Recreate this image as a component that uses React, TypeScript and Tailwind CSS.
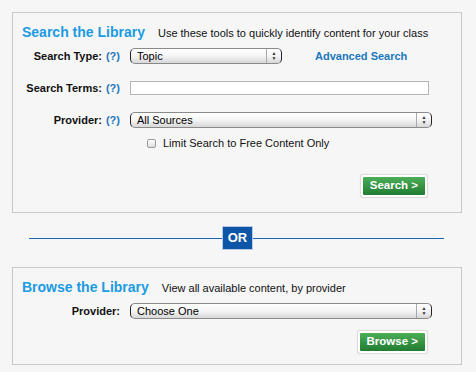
import React from 'react';

const font = { fontFamily: '"Liberation Sans", Arial, sans-serif' };

const Help = () => <span className="ml-[4px] text-[#1a77bd]">(?)</span>;

const SelectBox = ({ value, width }: { value: string; width: string }) => (
  <div
    className={`${width} flex h-[16px] items-stretch rounded-[5px] border border-[#8a8a8a] border-x-[#222] bg-gradient-to-b from-white via-[#f4f4f4] to-[#d8d8d8] text-[11px] leading-[14px] text-black`}
  >
    <span className="flex-1 pl-[6px]">{value}</span>
    <span className="flex w-[15px] flex-col items-center justify-center border-l border-[#a8a8a8] text-[5px] leading-[5px] text-[#333]">
      <span>▲</span>
      <span>▼</span>
    </span>
  </div>
);

const GreenButton = ({ label }: { label: string }) => (
  <div className="rounded-[3px] border border-[#dcdcdc] bg-white p-[2px] shadow-[0_0_1px_rgba(0,0,0,0.15)]">
    <div className="flex h-[18px] items-center justify-center rounded-[1px] bg-gradient-to-b from-[#4cae59] to-[#1f7c31] px-[7px] text-[11.5px] font-bold text-white">
      {label}
    </div>
  </div>
);

const Label = ({ children }: { children: React.ReactNode }) => (
  <div className="w-[107px] text-right text-[11px] font-bold text-[#111]">{children}</div>
);

export default function App() {
  return (
    <div className="h-[372px] w-[476px] overflow-hidden bg-[#f6f6f6] pt-[12px] pl-[12px]" style={font}>
      {/* search box */}
      <div className="flex h-[201px] w-[450px] flex-col border border-[#c9c9c9] pt-[9px]">
        <div className="flex h-[16px] items-baseline pl-[9px]">
          <span className="text-[14px] font-bold text-[#1b9be2]">Search the Library</span>
          <span className="ml-[13px] text-[11px] text-[#111]">Use these tools to quickly identify content for your class</span>
        </div>

        <div className="mt-[10px] flex h-[16px] items-center">
          <Label>
            Search Type:<Help />
          </Label>
          <div className="ml-[10px]">
            <SelectBox value="Topic" width="w-[152px]" />
          </div>
          <a className="ml-[33px] text-[11px] font-bold text-[#1a77bd]">Advanced Search</a>
        </div>

        <div className="mt-[16px] flex h-[16px] items-center">
          <Label>
            Search Terms:<Help />
          </Label>
          <div className="ml-[10px] h-[14px] w-[299px] border border-[#b5b5b5] bg-white" />
        </div>

        <div className="mt-[16px] flex h-[16px] items-center">
          <Label>
            Provider:<Help />
          </Label>
          <div className="ml-[10px]">
            <SelectBox value="All Sources" width="w-[302px]" />
          </div>
        </div>

        <div className="mt-[7px] flex h-[16px] items-center pl-[134px]">
          <div className="h-[9px] w-[9px] rounded-[2px] border border-[#9a9a9a] bg-gradient-to-b from-white to-[#dedede]" />
          <span className="ml-[7px] text-[11px] text-[#111]">Limit Search to Free Content Only</span>
        </div>

        <div className="mt-[23px] flex justify-end pr-[33px]">
          <GreenButton label="Search >" />
        </div>
      </div>

      {/* OR divider */}
      <div className="mt-[13px] flex h-[24px] w-[450px] items-center pl-[17px]">
        <div className="h-px w-[193px] bg-[#1a62b2]" />
        <div className="flex h-[24px] w-[31px] items-center justify-center border border-[#b9c9e2] bg-[#0d55a6] text-[13px] font-bold text-white">
          OR
        </div>
        <div className="h-px w-[191px] bg-[#1a62b2]" />
      </div>

      {/* browse box */}
      <div className="mt-[17px] flex h-[98px] w-[450px] flex-col border border-[#c9c9c9] pt-[9px]">
        <div className="flex h-[16px] items-baseline pl-[9px]">
          <span className="text-[14px] font-bold text-[#1b9be2]">Browse the Library</span>
          <span className="ml-[13px] text-[11px] text-[#111]">View all available content, by provider</span>
        </div>

        <div className="mt-[10px] flex h-[16px] items-center">
          <Label>Provider:</Label>
          <div className="ml-[10px]">
            <SelectBox value="Choose One" width="w-[302px]" />
          </div>
        </div>

        <div className="mt-[11px] flex justify-end pr-[33px]">
          <GreenButton label="Browse >" />
        </div>
      </div>
    </div>
  );
}
